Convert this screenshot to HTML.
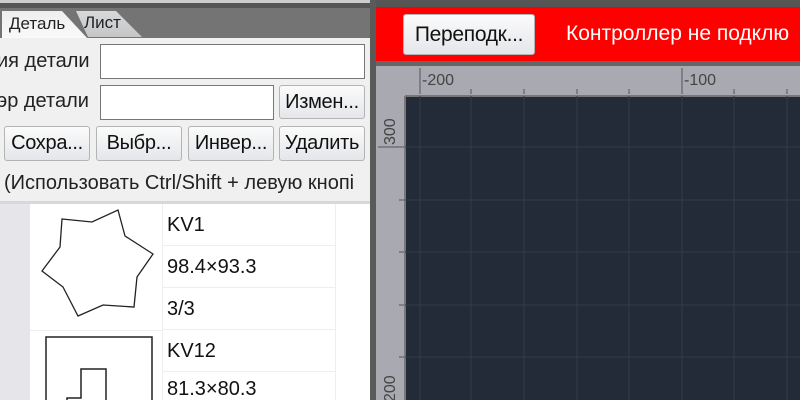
<!DOCTYPE html>
<html><head><meta charset="utf-8"><style>
*{margin:0;padding:0;box-sizing:border-box}
html,body{width:800px;height:400px;overflow:hidden}
body{background:#6b6b6b;font-family:"Liberation Sans","DejaVu Sans",sans-serif;position:relative}
.a{position:absolute}
.btn{position:absolute;border:1px solid #b4b4b4;border-radius:3px;background:linear-gradient(#fbfbfb,#e4e6ea);font-size:20px;color:#111;text-align:center;white-space:nowrap;overflow:hidden;letter-spacing:-0.3px}
.in{position:absolute;background:#fff;border:1px solid #777}
.lbl{position:absolute;font-size:20px;color:#222;white-space:nowrap}
.cell{position:absolute;left:163px;width:172px;font-size:20px;color:#111;background:#fff;border-bottom:1px solid #eee;padding-left:4px;overflow:hidden}
</style></head><body>
<div class="a" style="left:0;top:0;width:370px;height:3px;background:#ccc"></div>
<div class="a" style="left:0;top:3px;width:370px;height:5px;background:#555"></div>
<div class="a" style="left:0;top:8px;width:370px;height:30px;background:#747474"></div>
<div class="a" style="left:2px;top:11px;width:86px;height:28px;background:linear-gradient(#eee,#fafafa);clip-path:polygon(0 0,60px 0,86px 100%,0 100%)"></div>
<div class="lbl" style="left:9px;top:14px;font-size:17px">Деталь</div>
<div class="a" style="left:76px;top:11px;width:66px;height:26px;background:linear-gradient(#d8d8d8,#c4c6c8);clip-path:polygon(0 0,40px 0,66px 100%,12px 100%)"></div>
<div class="lbl" style="left:84px;top:13px;font-size:17px">Лист</div>
<div class="a" style="left:0;top:38px;width:370px;height:164px;background:#f0f0f0"></div>
<div class="lbl" style="left:-3px;top:50px">ия детали</div>
<div class="in" style="left:100px;top:44px;width:265px;height:35px"></div>
<div class="lbl" style="left:-3px;top:90px">эр детали</div>
<div class="in" style="left:100px;top:85px;width:174px;height:35px"></div>
<div class="btn" style="left:279px;top:85px;width:86px;height:34px;line-height:32px">Измен...</div>
<div class="btn" style="left:4px;top:126px;width:86px;height:35px;line-height:33px">Сохра...</div>
<div class="btn" style="left:96px;top:126px;width:86px;height:35px;line-height:33px">Выбр...</div>
<div class="btn" style="left:188px;top:126px;width:86px;height:35px;line-height:33px">Инвер...</div>
<div class="btn" style="left:279px;top:126px;width:86px;height:35px;line-height:33px">Удалить</div>
<div class="lbl" style="left:4px;top:172px">(Использовать Ctrl/Shift + левую кнопі</div>
<div class="a" style="left:0;top:201px;width:370px;height:3px;background:#d8d8d8"></div>
<div class="a" style="left:0;top:204px;width:370px;height:196px;background:#fff"></div>
<div class="a" style="left:0;top:204px;width:30px;height:196px;background:#e6e6ea"></div>
<div class="a" style="left:30px;top:330px;width:133px;height:1px;background:#eee"></div>
<div class="a" style="left:162px;top:204px;width:1px;height:196px;background:#eee"></div>
<div class="cell" style="top:204px;height:42px;line-height:42px">KV1</div>
<div class="cell" style="top:246px;height:42px;line-height:42px">98.4×93.3</div>
<div class="cell" style="top:288px;height:42px;line-height:42px">3/3</div>
<div class="cell" style="top:330px;height:42px;line-height:42px">KV12</div>
<div class="cell" style="top:372px;height:28px;line-height:34px;border:none">81.3×80.3</div>
<div class="a" style="left:335px;top:204px;width:1px;height:196px;background:#eee"></div>
<svg class="a" style="left:0;top:200px" width="170" height="200"><path d="M62,19 L92,22 L118,10 L125,36 L153,54 L137,77 L134,107 L103,105 L78,116 L63,87 L42,71 L60,47 Z" fill="none" stroke="#222" stroke-width="1.3"/><path d="M46,200 V137 H152 V200 M67,200 V198 H81 V169 H106 V200" fill="none" stroke="#222" stroke-width="1.5"/></svg>
<div class="a" style="left:370px;top:0;width:6px;height:400px;background:#5a5a5a"></div>
<div class="a" style="left:376px;top:0;width:424px;height:7px;background:#555"></div>
<div class="a" style="left:376px;top:7px;width:424px;height:54px;background:#ff0000"></div>
<div class="btn" style="left:403px;top:14px;width:132px;height:41px;line-height:39px;font-size:21px">Переподк...</div>
<div class="lbl" style="left:566px;top:22px;color:#fff;font-size:21px">Контроллер не подклю</div>
<div class="a" style="left:376px;top:61px;width:424px;height:5px;background:#666"></div>
<div class="a" style="left:376px;top:66px;width:424px;height:334px;background:#a9a9b1"></div>
<svg class="a" style="left:376px;top:66px" width="424" height="334">
<rect x="29" y="30" width="395" height="304" fill="#222b37"/>
<line x1="29" y1="30" x2="424" y2="30" stroke="#777" stroke-width="2"/>
<line x1="29" y1="30" x2="29" y2="334" stroke="#777" stroke-width="2"/>
<g stroke="#323c4a" stroke-width="1">
<line x1="44" y1="30" x2="44" y2="334"/><line x1="95" y1="30" x2="95" y2="334"/><line x1="148" y1="30" x2="148" y2="334"/><line x1="201" y1="30" x2="201" y2="334"/><line x1="253" y1="30" x2="253" y2="334"/><line x1="306" y1="30" x2="306" y2="334"/><line x1="358" y1="30" x2="358" y2="334"/><line x1="411" y1="30" x2="411" y2="334"/>
<line x1="29" y1="81" x2="424" y2="81"/><line x1="29" y1="134" x2="424" y2="134"/><line x1="29" y1="186" x2="424" y2="186"/><line x1="29" y1="239" x2="424" y2="239"/><line x1="29" y1="291" x2="424" y2="291"/>
</g>
<g stroke="#555" stroke-width="1">
<line x1="44" y1="2" x2="44" y2="28"/><line x1="95" y1="23" x2="95" y2="28"/><line x1="148" y1="23" x2="148" y2="28"/><line x1="201" y1="23" x2="201" y2="28"/><line x1="253" y1="23" x2="253" y2="28"/><line x1="306" y1="2" x2="306" y2="28"/><line x1="358" y1="23" x2="358" y2="28"/><line x1="411" y1="23" x2="411" y2="28"/>
<line x1="2" y1="81" x2="28" y2="81"/><line x1="23" y1="134" x2="28" y2="134"/><line x1="23" y1="186" x2="28" y2="186"/><line x1="23" y1="239" x2="28" y2="239"/><line x1="23" y1="291" x2="28" y2="291"/>
</g>
<g font-family="Liberation Sans" font-size="16" fill="#444">
<text x="46" y="19">-200</text><text x="308" y="19">-100</text>
<text transform="translate(19,79) rotate(-90)">300</text>
<text transform="translate(19,336) rotate(-90)">200</text>
</g>
</svg>
</body></html>
